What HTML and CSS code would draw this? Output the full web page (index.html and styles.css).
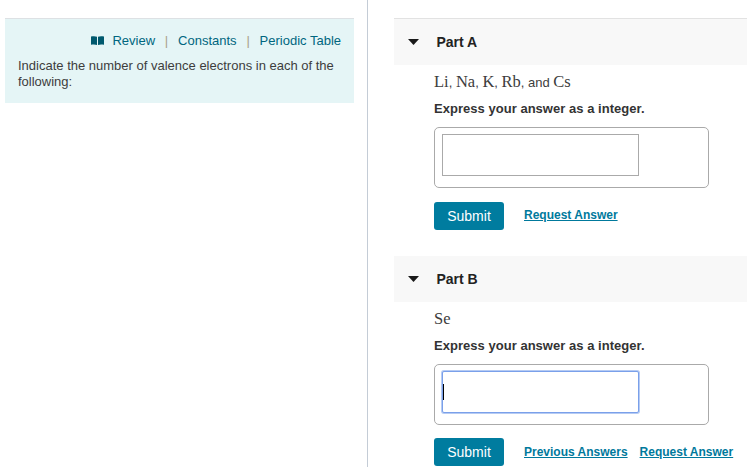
FILE: index.html
```html
<!DOCTYPE html>
<html lang="en">
<head>
<meta charset="utf-8">
<title>Valence electrons</title>
<link rel="stylesheet" href="styles.css">
</head>
<body>
<div class="page">
  <aside class="left">
    <div class="intro">
      <nav class="links">
        <svg class="book" width="13" height="9" viewBox="0 0 13 9"><path d="M0 .6C2 0 4.400 0 6 .8V9C4.400 8.300 2 8.300 0 8.800zM13 .6C11 0 8.600 0 7 .8V9C8.600 8.300 11 8.300 13 8.800z" fill="#00596e"/></svg>
        <a class="link first">Review</a><span class="sep">|</span><a class="link">Constants</a><span class="sep">|</span><a class="link">Periodic Table</a>
      </nav>
      <p class="prompt">Indicate the number of valence electrons in each of the following:</p>
    </div>
  </aside>
  <main class="right">
    <section class="part part-a">
      <header class="part-head">
        <svg class="caret" width="11" height="6" viewBox="0 0 11 6"><path d="M0 0h11L5.500 6z" fill="#1a1a1a"/></svg>
        <h2 class="part-title">Part A</h2>
      </header>
      <div class="part-body">
        <p class="formula"><span class="el">Li</span>, <span class="el">Na</span>, <span class="el">K</span>, <span class="el">Rb</span>, and <span class="el">Cs</span></p>
        <p class="express">Express your answer as a integer.</p>
        <div class="answer-box"><div class="field"></div></div>
        <div class="actions">
          <button class="submit">Submit</button>
          <a class="action-link">Request Answer</a>
        </div>
      </div>
    </section>
    <section class="part part-b">
      <header class="part-head">
        <svg class="caret" width="11" height="6" viewBox="0 0 11 6"><path d="M0 0h11L5.500 6z" fill="#1a1a1a"/></svg>
        <h2 class="part-title">Part B</h2>
      </header>
      <div class="part-body">
        <p class="formula"><span class="el">Se</span></p>
        <p class="express">Express your answer as a integer.</p>
        <div class="answer-box"><div class="field focused"><span class="cursor"></span></div></div>
        <div class="actions">
          <button class="submit">Submit</button>
          <a class="action-link">Previous Answers</a>
          <a class="action-link">Request Answer</a>
        </div>
      </div>
    </section>
  </main>
</div>
</body>
</html>
```
FILE: styles.css
```css
* { box-sizing: border-box; }
html, body { margin: 0; height: 100%; overflow: hidden; background: #fff; }
body { font-family: "Liberation Sans", Arial, sans-serif; color: #333; }
.page { display: flex; height: 467px; }
.left { width: 368px; flex: none; padding: 18px 13px 0 5px; border-right: 1px solid #c4ccd6; }
.intro { background: #e5f5f6; border-top: 1px solid #dde1e4; height: 85px; padding: 13px 13px 0; }
.links { display: flex; justify-content: flex-end; align-items: center; height: 16px; font-size: 13px; color: #00667f; }
.book { margin-right: 8px; }
.sep { color: #a9a089; margin: 0 9.800px; font-size: 13px; }
.prompt { margin: 10px 0 0; font-size: 13px; line-height: 16px; color: #3d3d3d; }
.right { flex: 1; padding: 18px 0 0 26px; min-width: 0; }
.part-a { border-top: 1px solid #e2e2e2; }
.part-b { margin-top: 26px; }
.part-head { display: flex; align-items: center; height: 46px; background: #f8f8f8; padding-left: 14px; }
.caret { margin-right: 17.500px; }
.part-title { margin: 0; font-size: 14px; font-weight: 700; color: #222; }
.part-body { padding: 0 0 0 40px; }
.formula { margin: 0; padding-top: 7px; height: 35px; font-size: 13px; line-height: 20px; color: #3d3d3d; }
.el { font-family: "Liberation Serif", serif; font-size: 16.500px; }
.express { margin: 0; height: 20px; font-size: 13px; line-height: 18px; font-weight: 700; color: #333; letter-spacing: .03px; }
.answer-box { width: 275px; height: 61px; margin-top: 7px; border: 1px solid #aaa; border-radius: 5px; padding: 6px 7px; }
.field { width: 197px; height: 42px; border: 1px solid #aaa; background: #fff; display: flex; align-items: center; }
.field.focused { border-color: #7aa0ea; box-shadow: 0 0 0 1px rgba(122, 160, 234, .55); border-radius: 2px; }
.cursor { display: block; width: 1px; height: 16px; background: #000; }
.actions { display: flex; align-items: center; margin-top: 14px; height: 28px; }
.part-b .actions { margin-top: 13px; }
.submit { width: 70px; height: 28px; border: 0; border-radius: 3px; background: #007c9f; color: #fff; font: 14px "Liberation Sans", Arial, sans-serif; margin-right: 20px; padding: 0; }
.action-link { font-size: 12px; font-weight: 700; color: #00799c; text-decoration: underline; margin-right: 12px; position: relative; top: -1px; }
.part-b .action-link { top: 0; }
```
